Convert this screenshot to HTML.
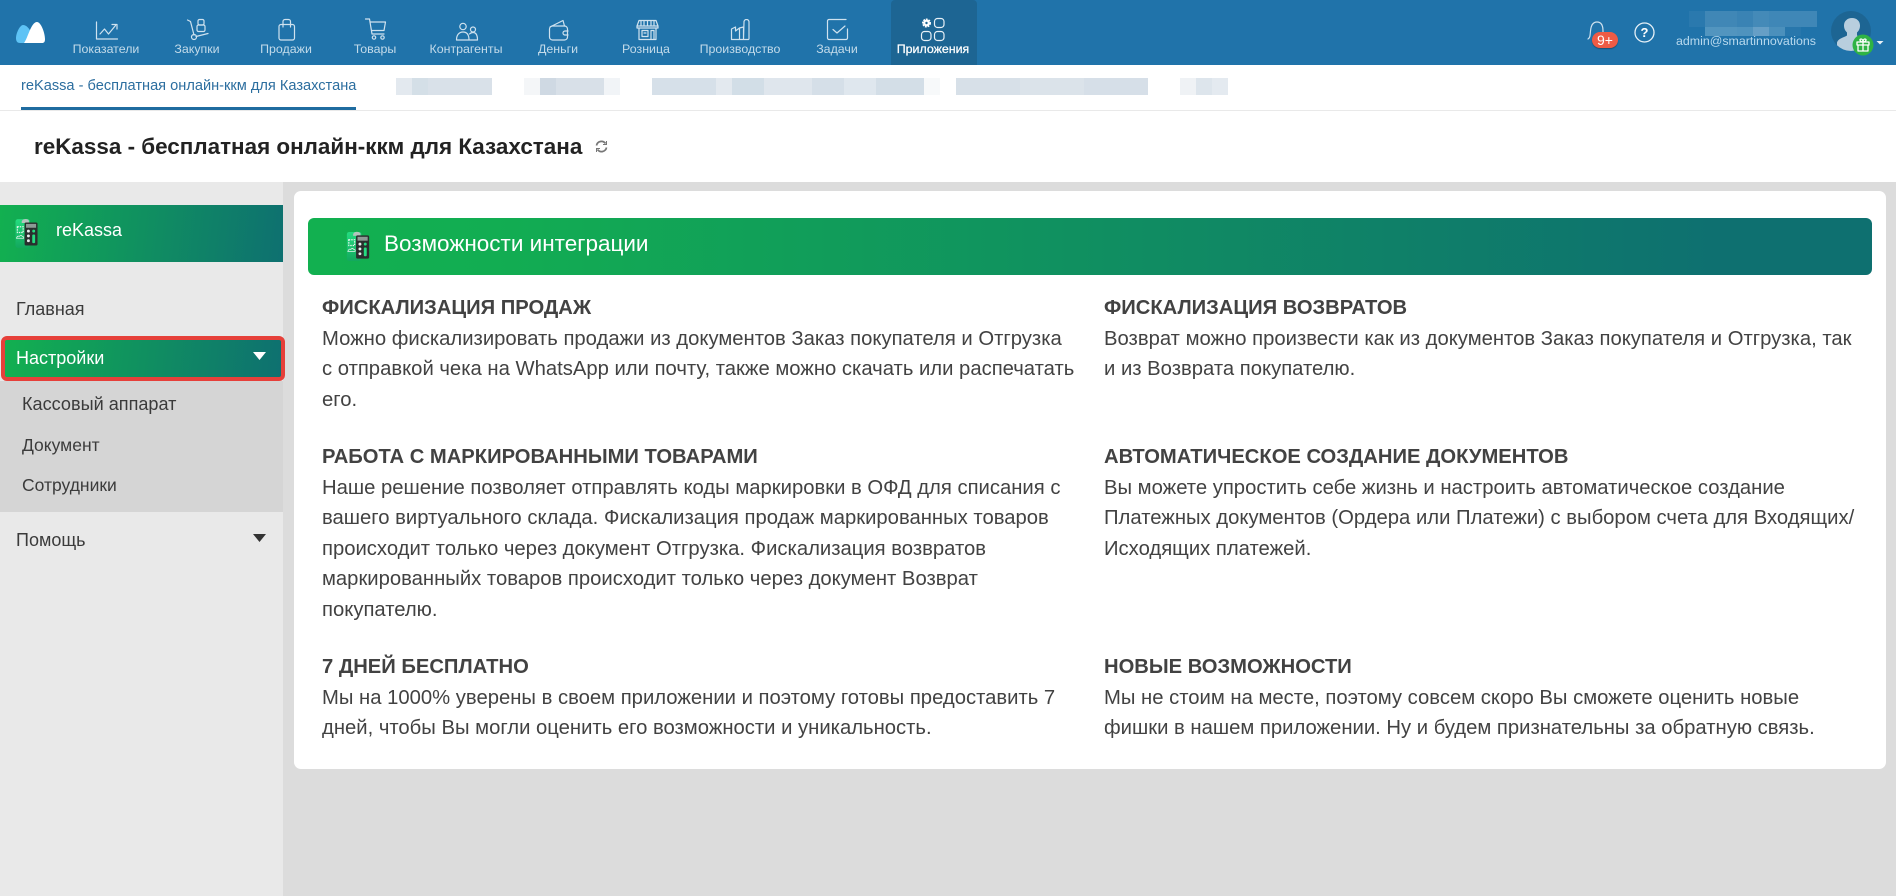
<!DOCTYPE html>
<html lang="ru"><head><meta charset="utf-8"><title>reKassa</title>
<style>
html,body{margin:0;padding:0}
body{width:1896px;height:896px;position:relative;overflow:hidden;background:#dcdcdc;font-family:"Liberation Sans",sans-serif;color:#444}
.a{position:absolute;white-space:nowrap}
#hd{left:0;top:0;width:1896px;height:65px;background:#2073aa}
.n{position:absolute;top:41px;width:100px;text-align:center;font-size:12.4px;line-height:16px;color:#c3dbea}
.i{position:absolute;fill:none;stroke:#cfe2ef;stroke-width:1.2;stroke-linecap:round;stroke-linejoin:round}
.b{position:absolute;font-size:20.25px;line-height:30.6px;color:#424242;white-space:nowrap}
.b b{font-size:20.2px;display:block;color:#424242}
.s{font-size:18px;color:#3b3b3b;line-height:20px}
.g{background:linear-gradient(97deg,#12b050 0%,#0e7070 100%)}
</style></head><body>
<svg width="0" height="0" style="position:absolute"><defs>
<linearGradient id="lg" x1="0" y1="0" x2="0" y2="1"><stop offset="0" stop-color="#25dc80"/><stop offset="1" stop-color="#13a85e"/></linearGradient>
<symbol id="k" viewBox="0 0 24 32">
<rect x="0.5" y="1" width="15" height="30" rx="2.500" fill="url(#lg)"/>
<path d="M7 3.500a4 3 0 0 1 7.500-1V5H7z" fill="#b5c4bd"/>
<rect x="2.500" y="9" width="6" height="6" fill="none" stroke="#e5f5ec" stroke-width="1.300" stroke-dasharray="1.500 1"/>
<path d="M1.500 21q1-3 3-2q2-2 3 0q2 0 1.500 2z" fill="none" stroke="#e5f5ec" stroke-width=".8"/>
<rect x="10" y="4.500" width="13.500" height="24" rx="1.500" fill="#2a2f2e"/>
<rect x="11.500" y="6" width="10.500" height="4" fill="#8d9a95"/>
<circle cx="14" cy="13.500" r="1.500" fill="#e8eeee"/><circle cx="19.500" cy="13.500" r="1.500" fill="#25dc80"/>
<circle cx="14" cy="18.500" r="1.500" fill="#e8eeee"/><circle cx="14" cy="23.500" r="1.500" fill="#e8eeee"/>
<rect x="18" y="17" width="3" height="9" rx="1" fill="#25dc80"/>
</symbol>
<clipPath id="av"><circle cx="20" cy="20" r="20"/></clipPath>
</defs></svg>

<div class="a" id="hd"></div>
<svg class="a" style="left:16px;top:22px" width="30" height="22" viewBox="0 0 30 22">
<path d="M0 16C0 11 4 3 7 3c3 0 6 3 8 7L10 21H4C1 21 0 19 0 16z" fill="#5ec3f5"/>
<path d="M8 21C12 16 15 0 21 0c4 0 8 11 8 17 0 3-1 4-3 4z" fill="#fff"/></svg>

<svg class="i" style="left:95px;top:21px" width="24" height="19" viewBox="0 0 24 19"><path d="M1.500 1v17h21M5 13l4.500-5 4 5 7-8.500M17 3.500h5V8"/></svg>
<svg class="i" style="left:186px;top:18px" width="24" height="23" viewBox="0 0 24 23"><path d="M1.500 2l3 1.500 3.500 13.500M10 18.500l12-3"/><circle cx="8" cy="19" r="2.500"/><rect x="12" y="1.500" width="6" height="5.500" rx="1.500"/><rect x="11" y="7" width="8" height="6.500" rx="1.500"/></svg>
<svg class="i" style="left:277px;top:18px" width="20" height="24" viewBox="0 0 20 24"><rect x="2" y="6.500" width="15.500" height="15.500" rx="2"/><path d="M6 9V3.500a2 2 0 0 1 2-2h3.500a2 2 0 0 1 2 2V9"/></svg>
<svg class="i" style="left:364px;top:17px" width="24" height="24" viewBox="0 0 24 24"><path d="M1.500 2h4l2.500 15h12M6 5h15.500l-1.500 8.500H7.500"/><circle cx="10" cy="20.500" r="1.700"/><circle cx="18.500" cy="20.500" r="1.700"/></svg>
<svg class="i" style="left:455px;top:22px" width="24" height="19" viewBox="0 0 24 19"><circle cx="8" cy="4.500" r="3.200"/><circle cx="18" cy="7.500" r="2.500"/><path d="M1.500 18c0-5 2.500-8 6.500-8s6 3 6 8zM14.500 12c1-1 2-1.500 3.500-1.500 3 0 4.500 3 4.500 7.500H14"/></svg>
<svg class="i" style="left:548px;top:19px" width="22" height="22" viewBox="0 0 22 22"><path d="M2 8L15 1.500 16.500 7"/><rect x="1.500" y="7" width="18" height="14" rx="3"/><path d="M20 12h-3a2 2 0 0 0 0 4h3"/></svg>
<svg class="i" style="left:636px;top:19px" width="23" height="22" viewBox="0 0 23 22"><path d="M3 1.500h17l2 5.500H1zM1 7v2h21V7M3 9v11.500h17V9M6 11.500h6v6H6zM8 14h2M15 11.500h3v9h-3zM5 2v5M8 2v5M11.500 2v5M15 2v5M18 2v5"/></svg>
<svg class="i" style="left:730px;top:19px" width="20" height="22" viewBox="0 0 20 22"><path d="M1.500 20.500V10l4-2v4l4-3v11.500M9.500 9l4-1v12.500M1.500 20.500h17a1 1 0 0 0 .5-1V3a2.500 2.500 0 0 0-5 0l-.5 17.500"/></svg>
<svg class="i" style="left:826px;top:18px" width="23" height="23" viewBox="0 0 23 23"><path d="M21.500 11v9a1.500 1.500 0 0 1-1.500 1.500H3A1.500 1.500 0 0 1 1.500 20V3A1.500 1.500 0 0 1 3 1.500h17M7 11.500l4 3.500 8-7"/></svg>
<div class="a" style="left:891px;top:0;width:86px;height:65px;background:#1d6593;border-radius:4px 4px 0 0"></div>
<svg class="i" style="left:920px;top:17px;stroke:#e8f1f7" width="26" height="26" viewBox="0 0 26 26"><rect x="14.500" y="1.500" width="9.500" height="9" rx="3"/><rect x="1.500" y="14.500" width="9.500" height="9" rx="3"/><rect x="14.500" y="14.500" width="9.500" height="9" rx="3"/><circle cx="6.500" cy="6" r="3.600" stroke="#fff" stroke-width="1.800" stroke-dasharray="1.800 .9" stroke-linecap="butt"/><circle cx="6.500" cy="6" r="3.400" fill="#fff" stroke="none"/><circle cx="6.500" cy="6" r="1.200" fill="#1d6593" stroke="none"/></svg>

<div class="n" style="left:56px">Показатели</div>
<div class="n" style="left:147px">Закупки</div>
<div class="n" style="left:236px">Продажи</div>
<div class="n" style="left:325px">Товары</div>
<div class="n" style="left:416px">Контрагенты</div>
<div class="n" style="left:508px">Деньги</div>
<div class="n" style="left:596px">Розница</div>
<div class="n" style="left:690px">Производство</div>
<div class="n" style="left:787px">Задачи</div>
<div class="n" style="left:883px;color:#fff;-webkit-text-stroke:.25px #fff">Приложения</div>

<svg class="i" style="left:1586px;top:20px" width="22" height="22" viewBox="0 0 22 22"><path d="M2 19c2-1 2-3 2.500-8C5 5 7 2 11 2s6 3 6 9v5"/></svg>
<div class="a" style="left:1592px;top:32px;width:26px;height:16px;background:#ee5b45;border-radius:8px;color:#fff;font-size:14px;line-height:16px;text-align:center;box-shadow:0 1px 1px #1b4f72">9+</div>
<svg class="a" style="left:1634px;top:22px" width="21" height="21" viewBox="0 0 21 21"><circle cx="10.500" cy="10.500" r="9.500" fill="none" stroke="#e5f0f7" stroke-width="1.300"/><text x="10.500" y="15" font-family="Liberation Sans" font-size="13" font-weight="700" fill="#fff" text-anchor="middle">?</text></svg>
<svg class="a" style="left:1689px;top:11px" width="128" height="25" viewBox="0 0 128 25" shape-rendering="crispEdges">
<rect x="0" y="0" width="16" height="16" fill="#2a79ae"/><rect x="16" y="0" width="32" height="16" fill="#4087b6"/><rect x="48" y="0" width="16" height="16" fill="#3a83b4"/><rect x="64" y="0" width="16" height="16" fill="#448ab8"/><rect x="80" y="0" width="48" height="16" fill="#3f87b7"/>
<rect x="16" y="16" width="32" height="9" fill="#5295bf"/><rect x="48" y="16" width="16" height="9" fill="#4f93be"/><rect x="64" y="16" width="16" height="9" fill="#669fc6"/><rect x="80" y="16" width="16" height="9" fill="#4b90bc"/><rect x="96" y="16" width="16" height="9" fill="#2877ac"/></svg>
<div class="a" style="left:1676px;top:33px;font-size:12.400px;line-height:16px;color:#b8d9ee">admin@smartinnovations</div>
<svg class="a" style="left:1831px;top:11px" width="60" height="48" viewBox="0 0 60 48">
<circle cx="20" cy="20" r="20" fill="#1d6593"/>
<path clip-path="url(#av)" d="M21 7c4.500 0 8 3 8 7.500 0 3-1 5-3 7v3c3 2 9 3 10 7v10H6v-10c1-4 7-5 10-7v-3c-2-2-3-4-3-7C13 10 16.500 7 21 7z" fill="#b8cede"/>
<circle cx="32" cy="34" r="10.500" fill="#2fb344"/>
<path d="M26 31h12v3H26zM27 34h10v6H27zM32 31v9M32 31c-3 0-4-3-2-3s2 3 2 3 0-3 2-3 1 3-2 3" fill="none" stroke="#fff" stroke-width="1.300" stroke-linejoin="round"/>
<path d="M45.500 30h7l-3.500 3.500z" fill="#e8f1f7"/></svg>

<div class="a" style="left:0;top:65px;width:1896px;height:117px;background:#fff"></div>
<div class="a" style="left:0;top:110px;width:1896px;height:1px;background:#e9e9e9"></div>
<div class="a" style="left:21px;top:77px;font-size:14.600px;line-height:18px;color:#2c6e9f">reKassa - бесплатная онлайн-ккм для Казахстана</div>
<div class="a" style="left:21px;top:107px;width:335px;height:3px;background:#1f6ca0"></div>
<svg class="a" style="left:396px;top:78px" width="840" height="17" viewBox="396 78 840 17" shape-rendering="crispEdges">
<rect x="396" y="78" width="16" height="17" fill="#e3e9ef"/><rect x="412" y="78" width="16" height="17" fill="#d4dfe7"/><rect x="428" y="78" width="64" height="17" fill="#d9e1e9"/>
<rect x="524" y="78" width="16" height="17" fill="#f4f6f8"/><rect x="540" y="78" width="16" height="17" fill="#cfd9e3"/><rect x="556" y="78" width="48" height="17" fill="#d8e0e8"/><rect x="604" y="78" width="16" height="17" fill="#f1f4f7"/>
<rect x="652" y="78" width="64" height="17" fill="#d6e0e9"/><rect x="716" y="78" width="16" height="17" fill="#e3e9ef"/><rect x="732" y="78" width="32" height="17" fill="#d2dee7"/><rect x="764" y="78" width="48" height="17" fill="#dfe6ed"/><rect x="812" y="78" width="32" height="17" fill="#d5dfe8"/><rect x="844" y="78" width="32" height="17" fill="#dfe7ee"/><rect x="876" y="78" width="48" height="17" fill="#d3dee7"/><rect x="924" y="78" width="16" height="17" fill="#f7f9fa"/>
<rect x="956" y="78" width="64" height="17" fill="#d7e0e8"/><rect x="1020" y="78" width="64" height="17" fill="#dbe3ea"/><rect x="1084" y="78" width="64" height="17" fill="#d6dfe8"/>
<rect x="1180" y="78" width="16" height="17" fill="#eff2f5"/><rect x="1196" y="78" width="16" height="17" fill="#dde5ec"/><rect x="1212" y="78" width="16" height="17" fill="#e4eaf0"/></svg>
<div class="a" style="left:34px;top:134px;font-size:22.450px;line-height:26px;font-weight:700;color:#222">reKassa - бесплатная онлайн-ккм для Казахстана</div>
<svg class="a" style="left:595px;top:140px" width="13" height="13" viewBox="0 0 13 13" fill="none" stroke="#777" stroke-width="1.700"><path d="M1.500 5.500A5 5 0 0 1 10.500 3.500M11.500 7.500A5 5 0 0 1 2.500 9.500"/><path d="M11.500 1v3.500H8M1.500 12V8.500H5" stroke-width="1"/></svg>

<div class="a" style="left:0;top:182px;width:283px;height:714px;background:#e9e9e9"></div>
<div class="a g" style="left:0;top:205px;width:283px;height:57px"></div>
<svg class="a" style="left:15px;top:218px" width="23" height="31"><use href="#k"/></svg>
<div class="a" style="left:56px;top:220px;font-size:18px;line-height:20px;color:#fff">reKassa</div>
<div class="a s" style="left:16px;top:299px">Главная</div>
<div class="a" style="left:0;top:381px;width:283px;height:131px;background:#d5d5d5"></div>
<div class="a g" style="left:1px;top:336px;width:284px;height:45px;box-sizing:border-box;border:4.500px solid #e6403a;border-radius:6px"></div>
<div class="a" style="left:16px;top:348px;font-size:18px;line-height:20px;color:#fff">Настройки</div>
<svg class="a" style="left:253px;top:352px" width="13" height="8"><path d="M0 0h13L6.500 8z" fill="#fff"/></svg>
<div class="a s" style="left:22px;top:394px;font-size:18.100px">Кассовый аппарат</div>
<div class="a s" style="left:22px;top:435px;font-size:17.500px">Документ</div>
<div class="a s" style="left:22px;top:475px;font-size:17.500px">Сотрудники</div>
<div class="a s" style="left:16px;top:530px">Помощь</div>
<svg class="a" style="left:253px;top:534px" width="13" height="8"><path d="M0 0h13L6.500 8z" fill="#333"/></svg>

<div class="a" style="left:294px;top:191px;width:1592px;height:578px;background:#fff;border-radius:7px"></div>
<div class="a" style="left:308px;top:218px;width:1564px;height:57px;border-radius:6px;background:linear-gradient(90deg,#12b050 0%,#12ad52 12%,#0e7070 90%)"></div>
<svg class="a" style="left:346px;top:231px" width="24" height="31"><use href="#k"/></svg>
<div class="a" style="left:384px;top:230px;font-size:22.500px;line-height:28px;color:#fff">Возможности интеграции</div>

<div class="b" style="left:322px;top:293px"><b>ФИСКАЛИЗАЦИЯ ПРОДАЖ</b>Можно фискализировать продажи из документов Заказ покупателя и Отгрузка<br>с отправкой чека на WhatsApp или почту, также можно скачать или распечатать<br>его.</div>
<div class="b" style="left:1104px;top:293px"><b>ФИСКАЛИЗАЦИЯ ВОЗВРАТОВ</b>Возврат можно произвести как из документов Заказ покупателя и Отгрузка, так<br>и из Возврата покупателю.</div>
<div class="b" style="left:322px;top:442px"><b>РАБОТА С МАРКИРОВАННЫМИ ТОВАРАМИ</b>Наше решение позволяет отправлять коды маркировки в ОФД для списания с<br>вашего виртуального склада. Фискализация продаж маркированных товаров<br>происходит только через документ Отгрузка. Фискализация возвратов<br>маркированныйх товаров происходит только через документ Возврат<br>покупателю.</div>
<div class="b" style="left:1104px;top:442px"><b>АВТОМАТИЧЕСКОЕ СОЗДАНИЕ ДОКУМЕНТОВ</b>Вы можете упростить себе жизнь и настроить автоматическое создание<br>Платежных документов (Ордера или Платежи) с выбором счета для Входящих/<br>Исходящих платежей.</div>
<div class="b" style="left:322px;top:652px"><b>7 ДНЕЙ БЕСПЛАТНО</b>Мы на 1000% уверены в своем приложении и поэтому готовы предоставить 7<br>дней, чтобы Вы могли оценить его возможности и уникальность.</div>
<div class="b" style="left:1104px;top:652px"><b>НОВЫЕ ВОЗМОЖНОСТИ</b>Мы не стоим на месте, поэтому совсем скоро Вы сможете оценить новые<br>фишки в нашем приложении. Ну и будем признательны за обратную связь.</div>
</body></html>
